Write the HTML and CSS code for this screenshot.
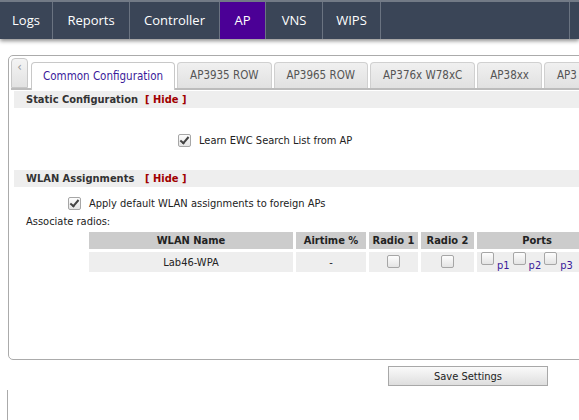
FILE: index.html
```html
<!DOCTYPE html>
<html>
<head>
<meta charset="utf-8">
<link rel="stylesheet" href="styles.css">
</head>
<body>
<div class="nav">
  <div class="nav-item w-logs">Logs</div>
  <div class="nav-item w-reports">Reports</div>
  <div class="nav-item w-controller">Controller</div>
  <div class="nav-item w-ap active">AP</div>
  <div class="nav-item w-vns">VNS</div>
  <div class="nav-item w-wips">WIPS</div>
  <div class="nav-item w-fill"></div>
  <div class="nav-item w-last"></div>
</div>
<div class="page">
  <div class="panel">
    <div class="tabstrip">
      <div class="arrow">&lsaquo;</div>
      <div class="tab active">Common Configuration</div>
      <div class="tab">AP3935 ROW</div>
      <div class="tab">AP3965 ROW</div>
      <div class="tab">AP376x W78xC</div>
      <div class="tab">AP38xx</div>
      <div class="tab last">AP3</div>
    </div>
    <div class="section-head"><span class="title">Static Configuration</span><span class="hide">[ Hide ]</span></div>
    <div class="learn-row"><span class="cb checked"></span><span>Learn EWC Search List from AP</span></div>
    <div class="section-head second"><span class="title">WLAN Assignments</span><span class="hide">[ Hide ]</span></div>
    <div class="apply-row"><span class="cb checked"></span><span>Apply default WLAN assignments to foreign APs</span></div>
    <div class="assoc">Associate radios:</div>
    <table class="wlan">
      <thead>
        <tr><th class="c-name">WLAN Name</th><th class="c-air">Airtime %</th><th class="c-r1">Radio 1</th><th class="c-r2">Radio 2</th><th class="c-ports">Ports</th></tr>
      </thead>
      <tbody>
        <tr>
          <td>Lab46-WPA</td>
          <td class="dash">-</td>
          <td><span class="cb"></span></td>
          <td><span class="cb"></span></td>
          <td class="ports"><span class="cb"></span><span class="p">p1</span><span class="cb"></span><span class="p">p2</span><span class="cb"></span><span class="p">p3</span></td>
        </tr>
      </tbody>
    </table>
  </div>
  <div class="actions"><button class="save">Save Settings</button></div>
  <div class="lower"></div>
</div>
</body>
</html>
```
FILE: styles.css
```css
html, body {
  margin: 0;
  padding: 0;
  overflow: hidden;
  background: #fff;
}
body {
  width: 579px;
  height: 420px;
  font-family: "DejaVu Sans Condensed", "DejaVu Sans", sans-serif;
  font-size: 11px;
  color: #222;
}
.nav {
  display: flex;
  height: 37px;
  background: #3a4557;
  border-top: 2px solid #727a86;
  box-shadow: 0 2px 4px rgba(0,0,0,0.45);
  font-family: "Open Sans", "Noto Sans", sans-serif;
  font-size: 13px;
  color: #fff;
  position: relative;
}
.nav-item {
  flex: none;
  display: flex;
  align-items: center;
  justify-content: center;
  border-right: 1px solid #6a7381;
  box-sizing: border-box;
  padding-bottom: 2px;
}
.w-logs { width: 53px; }
.w-reports { width: 77px; }
.w-controller { width: 90px; }
.w-ap { width: 46px; }
.w-vns { width: 57px; }
.w-wips { width: 58px; }
.w-fill { width: 189px; }
.w-last { width: 40px; border-right: none; }
.nav-item.active { background: #4b0096; }

.page {
  padding: 16px 0 0 8px;
}
.panel {
  width: 640px;
  height: 305px;
  border: 1px solid #ababab;
  border-radius: 5px;
  box-sizing: border-box;
  padding: 2px 0 0 2px;
  overflow: hidden;
}
.tabstrip {
  display: flex;
  gap: 2px;
  height: 30px;
  border-bottom: 2px solid #bcbcbc;
  align-items: flex-end;
}
.arrow {
  width: 17px;
  height: 30px;
  box-sizing: border-box;
  border: 1px solid #c8c8c8;
  border-radius: 4px 4px 0 0;
  background: linear-gradient(#f4f4f4, #e2e2e2);
  color: #999;
  font-size: 13px;
  text-align: center;
  line-height: 16px;
  margin-right: 1px;
}
.tab {
  height: 26px;
  box-sizing: border-box;
  padding: 0 12px;
  border: 1px solid #d0d0d0;
  border-bottom: none;
  border-radius: 4px 4px 0 0;
  background: linear-gradient(#f0f0f0, #e1e1e1);
  color: #555;
  font-size: 11.5px;
  line-height: 24px;
  white-space: nowrap;
  flex: none;
}
.tab.last { padding-right: 40px; }
.tab.active {
  background: #fff;
  color: #3a1a9a;
  height: 28px;
  margin-bottom: -2px;
  line-height: 26px;
  padding: 0 11px;
  border-color: #c8c8c8;
}
.section-head {
  margin: 1px 0 0 3px;
  height: 17px;
  background: #eeeeee;
  display: flex;
  align-items: center;
  font-weight: bold;
  padding-left: 12px;
  color: #333;
  white-space: nowrap;
}
.section-head .title { width: 119px; flex: none; }
.section-head .hide { color: #a00000; }
.section-head.second { margin-top: 22px; }

.cb {
  display: inline-block;
  width: 11px;
  height: 11px;
  border: 1px solid #a6a6a6;
  border-radius: 2px;
  background: linear-gradient(#fdfdfd, #e4e4e4);
  vertical-align: middle;
  position: relative;
  box-sizing: content-box;
}
.cb.checked::after {
  content: "";
  position: absolute;
  left: 3px;
  top: 0px;
  width: 3px;
  height: 7px;
  border: solid #444;
  border-width: 0 2px 2px 0;
  transform: rotate(40deg);
}
.learn-row {
  display: flex;
  align-items: center;
  gap: 8px;
  margin: 24px 0 0 167px;
  height: 16px;
}
.apply-row {
  display: flex;
  align-items: center;
  gap: 8px;
  margin: 8px 0 0 57px;
  height: 16px;
}
.assoc {
  margin: 3px 0 0 15px;
  height: 15px;
  line-height: 15px;
}
.wlan {
  margin: 0 0 0 78px;
  border-collapse: separate;
  border-spacing: 3px 3px;
  position: relative;
  left: -3px;
}
.wlan th {
  background: #cccccc;
  font-weight: bold;
  height: 17px;
  padding: 0;
  color: #222;
}
.wlan td {
  background: #eeeeee;
  height: 20px;
  padding: 0;
  text-align: center;
  vertical-align: middle;
}
.c-name { width: 204px; }
.c-air { width: 70px; }
.c-r1 { width: 49px; }
.c-r2 { width: 53px; }
.c-ports { width: 120px; }
.wlan td.ports {
  text-align: left;
  padding-left: 4px;
  white-space: nowrap;
}
.wlan td.ports .p {
  color: #3a1a9a;
  margin: 0 3px 0 3px;
  vertical-align: -3px;
}
.wlan td .cb { vertical-align: -1px; }
.wlan td.ports .cb { vertical-align: 1px; }

.actions {
  padding: 6px 0 0 380px;
}
.save {
  width: 160px;
  height: 20px;
  border: 1px solid #a8a8a8;
  border-radius: 0;
  background: linear-gradient(#fafafa, #dedede);
  font-family: "DejaVu Sans Condensed", "DejaVu Sans", sans-serif;
  font-size: 11px;
  color: #222;
  padding: 0;
  display: block;
}
.lower {
  margin: 4px 0 0 -1px;
  height: 40px;
  border-left: 1px solid #aaaaaa;
}
```
